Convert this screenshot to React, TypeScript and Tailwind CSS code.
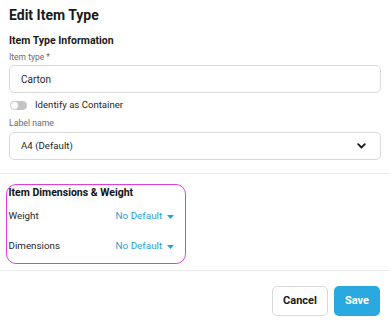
import React from 'react';

const DimRow: React.FC<{ label: string; value: string }> = ({ label, value }) => (
  <div className="flex items-center h-[30px] whitespace-nowrap">
    <span className="w-[107px] text-[9.8px] text-[#1f1f1f]">{label}</span>
    <span className="text-[9.9px] text-[#2b9fd6]">{value}</span>
    <svg className="ml-[5px] mt-[1px]" width="7" height="4" viewBox="0 0 7 4">
      <path d="M0 0 L7 0 L3.5 4 Z" fill="#2b9fd6" />
    </svg>
  </div>
);

export default function App() {
  return (
    <div
      className="w-[389px] h-[326px] bg-white overflow-hidden"
      style={{ fontFamily: 'Roboto, "Liberation Sans", sans-serif' }}
    >
      <div className="pl-[9px] pr-[8px]">
        <h1 className="mt-[6px] text-[14px] font-bold text-[#1a1a1a] leading-[18px]">Edit Item Type</h1>
        <h2 className="mt-[10px] text-[10.5px] font-bold text-[#1a1a1a] leading-[14px]">
          Item Type Information
        </h2>
        <div className="mt-[3px] text-[8.5px] text-[#6b6b6b] leading-[12px]">Item type *</div>
        <div className="mt-[2px] h-[28px] border border-[#d9d9d9] rounded-[5px] flex items-center pl-[11px] text-[10px] text-[#1f1f1f]">
          Carton
        </div>
        <div className="mt-[5px] flex items-center h-[14px]">
          <div className="ml-[1px] w-[17px] h-[9px] rounded-full bg-[#c4c4c4] relative">
            <div className="absolute left-0 top-0 w-[9px] h-[9px] rounded-full bg-white border border-[#cfcfcf]" />
          </div>
          <span className="ml-[8px] text-[9.6px] text-[#1f1f1f]">Identify as Container</span>
        </div>
        <div className="mt-[5px] text-[8.7px] text-[#6b6b6b] leading-[12px]">Label name</div>
        <div className="mt-[3px] h-[28px] border border-[#d9d9d9] rounded-[5px] flex items-center justify-between pl-[11px] pr-[14px] text-[9.7px] text-[#1f1f1f]">
          <span>A4 (Default)</span>
          <svg width="9" height="6" viewBox="0 0 9 6">
            <path d="M1.2 1.2 L4.5 4.5 L7.8 1.2" stroke="#1a1a1a" strokeWidth="1.8" fill="none" strokeLinecap="round" strokeLinejoin="round" />
          </svg>
        </div>
      </div>
      <div className="mt-[13px] h-px bg-[#ededed]" />
      <div className="pl-[6px] mt-[10px]">
        <div className="w-[180px] h-[80px] border-[1.5px] border-[#e23ddc] rounded-[10px] pl-[1.5px]">
          <div className="mt-[0.5px] text-[10.5px] font-bold text-[#111] leading-[14px]">
            Item Dimensions &amp; Weight
          </div>
          <div className="mt-[2px]">
            <DimRow label="Weight" value="No Default" />
            <DimRow label="Dimensions" value="No Default" />
          </div>
        </div>
      </div>
      <div className="mt-[6px] h-px bg-[#ededed]" />
      <div className="flex justify-end gap-[6px] pr-[9px] mt-[15px]">
        <button className="w-[56px] h-[30px] border border-[#dadada] rounded-[5px] bg-white text-[11px] font-bold text-[#1a1a1a]">
          Cancel
        </button>
        <button className="w-[46px] h-[30px] rounded-[5px] bg-[#2aa9e0] text-[11px] font-bold text-white">
          Save
        </button>
      </div>
    </div>
  );
}
